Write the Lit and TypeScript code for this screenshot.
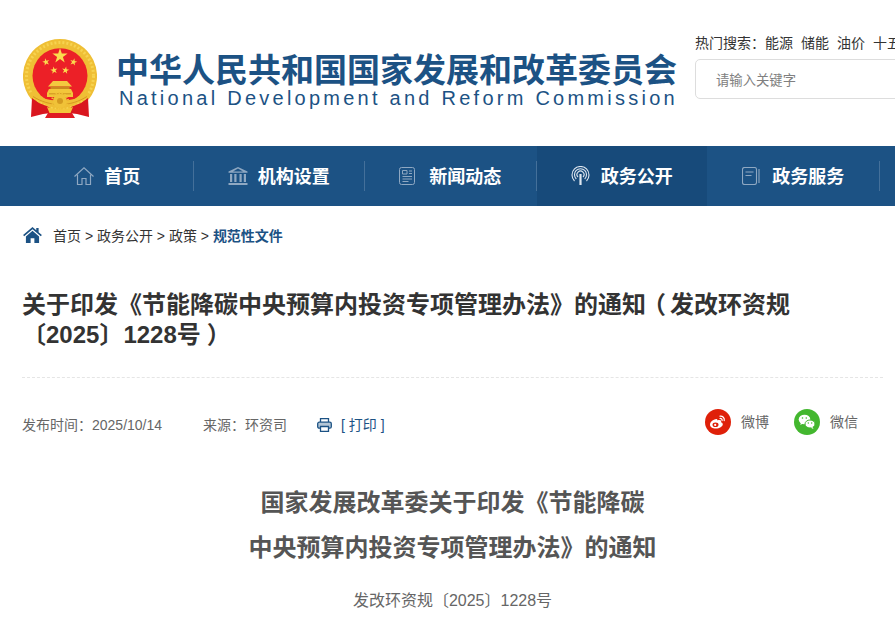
import { LitElement, html, css, svg } from "lit";
import { customElement } from "lit/decorators.js";

const star = (cx: number, cy: number, r: number, rot = 0) => {
  const pts: string[] = [];
  for (let i = 0; i < 10; i++) {
    const rad = i % 2 ? r * 0.382 : r;
    const a = ((-90 + rot + i * 36) * Math.PI) / 180;
    pts.push(`${(cx + rad * Math.cos(a)).toFixed(2)},${(cy + rad * Math.sin(a)).toFixed(2)}`);
  }
  return svg`<polygon points=${pts.join(" ")} fill="#fbdc4e"/>`;
};

const emblem = html`<svg class="emblem" viewBox="0 0 74 80" width="74" height="80">
  <path d="M37 0A37 37 0 0 1 66 60L50 72H24L8 60A37 37 0 0 1 37 0z" fill="#efbf35"/>
  <circle cx="37" cy="37" r="33.500" fill="none" stroke="#f7d350" stroke-width="3" stroke-dasharray="2 2"/>
  <circle cx="37" cy="36.700" r="27.500" fill="#ec2027"/>
  ${star(37, 17, 8)} ${star(23, 23, 3.800, -15)} ${star(50.500, 23, 3.800, 15)}
  ${star(31, 31.300, 3.800, -10)} ${star(42.500, 31.300, 3.800, 10)}
  <path d="M30 42h14l5 5.500H25z" fill="#f3c93f"/>
  <rect x="27.500" y="47.500" width="19" height="2.500" fill="#c98a1f"/>
  <path d="M26 50h22l2 4v4H24v-4z" fill="#f3c63a"/>
  <path d="M26 54h22v1.500H26z" fill="#d9a126"/>
  <path d="M8 55c8 6 18 9 29 9s21-3 29-9" fill="none" stroke="#efbf35" stroke-width="4.500"/>
  <path d="M10 57.500c8 5 17 8 27 8s19-3 27-8" fill="none" stroke="#d79a22" stroke-width="1"/>
  <circle cx="37" cy="62" r="7" fill="#f0c238"/>
  <circle cx="37" cy="62" r="8" fill="none" stroke="#efbf35" stroke-width="2" stroke-dasharray="1.500 1.500"/>
  <circle cx="37" cy="62" r="3" fill="#d49a20"/>
  <path d="M9 59l7 5 10 4 2 6-8 1-12 3z" fill="#d9161f"/>
  <path d="M65 59l-7 5-10 4-2 6 8 1 12 3z" fill="#d9161f"/>
  <path d="M24 68q13 5 26 0l-2.500 6h-21z" fill="#f3c63a"/>
  <path d="M25 74h24l3 5H22z" fill="#e01a22"/>
</svg>`;

const homeLine = svg`<svg class="ic" viewBox="0 0 20 18" width="20" height="18" fill="none" stroke="#8fa8c2" stroke-width="1.200">
  <path d="M.5 9.500 10 .8l9.500 8.700"/><path d="M3.500 7.500V17.500h4.500v-6h4v6h4.500V7.500"/></svg>`;
const bank = svg`<svg class="ic" viewBox="0 0 20 18" width="20" height="18" fill="#8fa8c2">
  <path d="M10 0 .5 4.500v1.200h19V4.500zM10 1.500 15 4.500H5z" fill-rule="evenodd"/>
  <path d="M2 7h2.200v8H2zM6.300 7h2.200v8H6.300zM11.500 7h2.200v8h-2.200zM15.800 7H18v8h-2.200zM.5 16h19v2H.5z"/></svg>`;
const news = svg`<svg class="ic pad4" viewBox="0 0 16 18" width="16" height="18" fill="none" stroke="#8fa8c2" stroke-width="1">
  <rect x=".5" y=".5" width="15" height="17" rx="2"/><path d="M3.500 3.500h4.500v3.500H3.500zM10 4h3M10 6.500h3M3.500 9.500h9.500M3.500 12h9.500M3.500 14.500h6"/></svg>`;
const signal = svg`<svg class="ic pad1" viewBox="0 0 19 19" width="19" height="19" fill="none" stroke="#dfe7f0" stroke-width="1.100">
  <path d="M3.500 15a8.500 8.500 0 1 1 12 0"/><path d="M5.300 13a6 6 0 1 1 8.400 0"/><path d="M7 11a3.500 3.500 0 1 1 5 0"/>
  <path d="M9.500 8V19" stroke-width="2.200"/></svg>`;
const book = svg`<svg class="ic pad2" viewBox="0 0 18 18" width="18" height="18" fill="none" stroke="#8fa8c2" stroke-width="1.100">
  <rect x=".5" y=".5" width="14" height="17" rx="2"/><path d="M3.500 5h8M3.500 8.500h6M17 2v14"/></svg>`;

const navItems = [
  { t: "首页", i: homeLine },
  { t: "机构设置", i: bank },
  { t: "新闻动态", i: news },
  { t: "政务公开", i: signal, active: true },
  { t: "政务服务", i: book },
];

@customElement("app-root")
export class AppRoot extends LitElement {
  static styles = css`
    :host {
      display: block;
      width: 895px;
      height: 629px;
      overflow: hidden;
      background: #fff;
      font-family: "Liberation Sans", "Noto Sans CJK SC", sans-serif;
      color: #333;
    }
    .head {
      display: flex;
      height: 146px;
      width: 1200px;
      box-sizing: border-box;
      padding: 39px 0 0 23px;
    }
    .emblem { flex: none; display: block; }
    .brand { margin-left: 19px; width: 562px; flex: none; padding-top: 13px; }
    .cn {
      font-size: 33px;
      line-height: 38px;
      font-weight: 700;
      color: #1c5284;
      white-space: nowrap;
    }
    .en {
      margin: -5px 0 0 3px;
      font-size: 20px;
      line-height: 26px;
      color: #1c5284;
      letter-spacing: 3.250px;
      white-space: nowrap;
    }
    .tools { margin-left: 17px; flex: none; width: 400px; margin-top: -4px; }
    .hot { font-size: 14px; line-height: 16px; color: #333; white-space: nowrap; display: flex; }
    .hot span { margin-right: 8px; }
    .hot .lbl { margin-right: 0; }
    .search {
      margin-top: 8px;
      width: 300px;
      height: 40px;
      box-sizing: border-box;
      border: 1px solid #ddd;
      border-radius: 5px;
      padding-left: 20px;
      display: flex;
      align-items: center;
      font-size: 13.330px;
      color: #808080;
    }
    .nav {
      height: 60px;
      background: #1c5284;
      display: flex;
      align-items: stretch;
      padding-left: 22px;
      width: 1200px;
      box-sizing: border-box;
    }
    .item {
      flex: none;
      width: 170.500px;
      display: flex;
      align-items: center;
      justify-content: center;
      gap: 10px;
      color: #fff;
      font-size: 18px;
      font-weight: 700;
    }
    .item span { margin-bottom: 2px; }
    .item.active { background: #174a7a; }
    .item .ic { flex: none; display: block; margin-bottom: 1px; }
    .item .pad4 { margin-right: 4px; }
    .item .pad2 { margin-right: 2px; }
    .item .pad1 { margin-right: 1px; }
    .sep { flex: none; width: 1px; height: 30px; align-self: center; background: #44709a; }
    .crumb {
      display: flex;
      align-items: center;
      padding: 19px 0 0 23px;
      height: 20px;
      font-size: 14px;
      color: #333;
      white-space: pre;
    }
    .crumb svg { margin-right: 11px; flex: none; }
    .crumb b { color: #1c5284; font-weight: 700; }
    .main { padding: 0 12px 0 22px; }
    h1 {
      margin: 45px 0 0;
      font-size: 24px;
      line-height: 30px;
      font-weight: 700;
      color: #333;
      padding-bottom: 27px;
      border-bottom: 1px dashed #e5e5e5;
    }
    .lp { font-feature-settings: "halt"; margin: 0 4px 0 8px; }
    .rp { font-feature-settings: "halt"; margin: 0 3px 0 6px; }
    .meta {
      display: flex;
      align-items: center;
      height: 26px;
      margin-top: 33px;
      font-size: 14px;
      color: #666;
      white-space: nowrap;
    }
    .src { margin-left: 41px; }
    .print { margin: 2px 0 0 30px; display: block; }
    .pt { margin-left: 9px; color: #1c5284; }
    .share { margin-left: auto; display: flex; align-items: center; margin-right: 25px; margin-top: -5px; }
    .share svg { display: block; flex: none; }
    .share span { margin: 0 25px 2px 10px; }
    .share span:last-child { margin-right: 0; }
    .at { text-align: center; font-size: 24px; font-weight: 700; line-height: 45px; color: #555; margin: 43px 0 0; }
    .no { text-align: center; font-size: 16px; line-height: 30px; color: #666; margin-top: 16px; }
  `;

  render() {
    return html`
      <div class="head">
        ${emblem}
        <div class="brand">
          <div class="cn">中华人民共和国国家发展和改革委员会</div>
          <div class="en">National Development and Reform Commission</div>
        </div>
        <div class="tools">
          <div class="hot"><span class="lbl">热门搜索：</span><span>能源</span><span>储能</span><span>油价</span><span>十五五</span></div>
          <div class="search">请输入关键字</div>
        </div>
      </div>
      <div class="nav">
        ${navItems.map(
          (n, i) => html`<div class="item ${n.active ? "active" : ""}">${n.i}<span>${n.t}</span></div>
            <div class="sep" style=${i === 3 ? "background:transparent" : ""}></div>`
        )}
      </div>
      <div class="crumb">
        <svg viewBox="0 0 20 17" width="19" height="16" fill="#1c5284">
          <path d="M10 0 0 8.500l1.200 1.400L10 2.500l8.800 7.400L20 8.500 16.500 5.500V1h-2.500v2.400z"/>
          <path d="M10 4 3 10v7h5v-5h4v5h5v-7z"/>
        </svg>
        <span>首页 &gt; 政务公开 &gt; 政策 &gt; </span><b>规范性文件</b>
      </div>
      <div class="main">
        <h1>关于印发《节能降碳中央预算内投资专项管理办法》的通知<span class="lp">（</span>发改环资规<br />〔2025〕1228号<span class="rp">）</span></h1>
        <div class="meta">
          <span>发布时间：2025/10/14</span>
          <span class="src">来源：环资司</span>
          <svg class="print" viewBox="0 0 15 14" width="15" height="14" fill="none" stroke="#1c5284" stroke-width="1.300">
            <path d="M3.500 4V.7h8V4"/><rect x=".7" y="4.200" width="13.600" height="6" rx="1.500" fill="#b4c6d6"/><path d="M3.500 8.500h8v4.800h-8z" fill="#fff"/>
          </svg>
          <span class="pt">[ 打印 ]</span>
          <div class="share">
            <svg viewBox="0 0 26 26" width="26" height="26">
              <circle cx="13" cy="13" r="13" fill="#df2009"/>
              <path d="M11.500 10c-3.500.5-6.500 3-6.500 5.800 0 2.300 2.600 3.700 5.800 3.700 3.700 0 7-2 7-4.300 0-1.300-1.200-1.800-1.800-2 .5-1.400 0-2.300-1.800-2.300-1 0-2 .4-2 .4s.5-1.800-.7-1.300z" fill="#fff"/>
              <ellipse cx="10.500" cy="15.800" rx="3" ry="2.300" fill="#df2009"/>
              <circle cx="10.200" cy="15.900" r="1.100" fill="#fff"/>
              <path d="M15 7.200c2.600-.3 4.800 1.600 4.200 4.500M15 9.500c1.300-.2 2.400.8 2.100 2.100" fill="none" stroke="#fff" stroke-width="1.200" stroke-linecap="round"/>
            </svg>
            <span>微博</span>
            <svg viewBox="0 0 26 26" width="26" height="26">
              <circle cx="13" cy="13" r="13" fill="#43b72f"/>
              <ellipse cx="10.500" cy="10.500" rx="5.800" ry="4.800" fill="#fff"/>
              <path d="M7 13.500 6.300 16l2.700-1.500z" fill="#fff"/>
              <ellipse cx="16" cy="15" rx="5" ry="4" fill="#fff" stroke="#43b72f" stroke-width="1"/>
              <path d="M18.500 18l1 2-2.700-1.200z" fill="#fff"/>
              <circle cx="8.500" cy="9" r=".8" fill="#43b72f"/><circle cx="12.300" cy="9" r=".8" fill="#43b72f"/>
              <circle cx="14.300" cy="14" r=".7" fill="#43b72f"/><circle cx="17.700" cy="14" r=".7" fill="#43b72f"/>
            </svg>
            <span>微信</span>
          </div>
        </div>
        <div class="at">国家发展改革委关于印发《节能降碳<br />中央预算内投资专项管理办法》的通知</div>
        <div class="no">发改环资规〔2025〕1228号</div>
      </div>
    `;
  }
}
